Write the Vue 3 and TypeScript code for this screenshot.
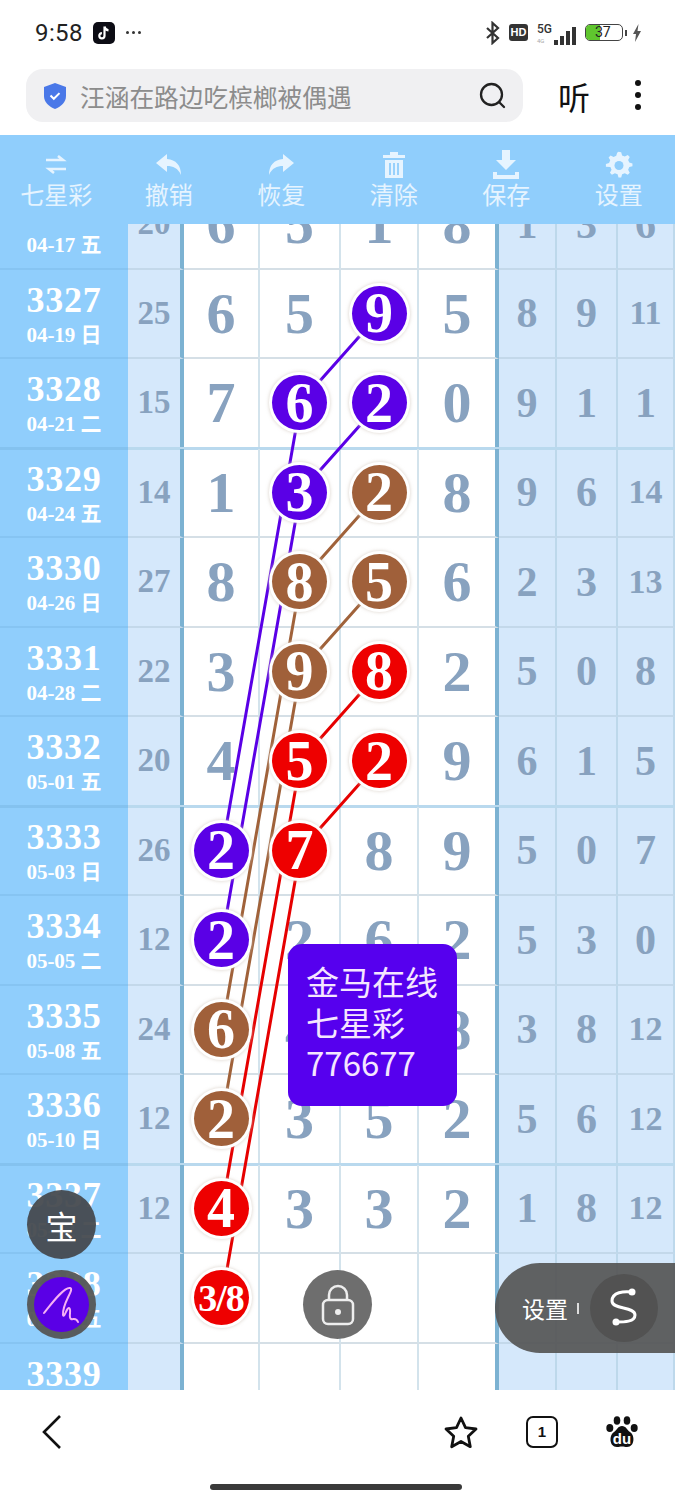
<template>
  <div class="page">
    <!-- status bar -->
    <div class="status">
      <div class="status-left">
        <span class="time">9:58</span>
        <svg class="tiktok" width="22" height="22" viewBox="0 0 22 22">
          <rect width="22" height="22" rx="5" fill="#0c0c14" />
          <path d="M11.5 4.5v9.2a2.6 2.6 0 1 1-2.6-2.6M11.5 4.5c.3 2.2 1.8 3.6 4 3.8" fill="none" stroke="#fff" stroke-width="2.2" />
        </svg>
        <span class="dots-small"><i></i><i></i><i></i></span>
      </div>
      <div class="status-right">
        <svg width="16" height="24" viewBox="0 0 16 24">
          <path d="M2 7l11 10-5.500 5V2L13 7 2 17" fill="none" stroke="#333" stroke-width="2.200" />
        </svg>
        <span class="hd">HD</span>
        <div class="signal">
          <div class="net"><b>5G</b><small>4G</small></div>
          <i style="height: 5px"></i><i style="height: 9px"></i><i style="height: 14px"></i><i style="height: 18px"></i>
        </div>
        <div class="battery"><span class="level"></span><span class="pct">37</span></div>
        <span class="nub"></span>
        <svg width="10" height="18" viewBox="0 0 10 18">
          <path d="M6.500 0L1 10h3l-1 8 6-11H5.500z" fill="#555" />
        </svg>
      </div>
    </div>

    <!-- search row -->
    <div class="search-row">
      <div class="search">
        <svg width="22" height="26" viewBox="0 0 22 26">
          <path d="M11 0l11 4v9c0 6-4.500 10.500-11 13C4.500 23.500 0 19 0 13V4z" fill="#4a78e8" />
          <path d="M6.500 12.500l3.300 3.300 5.700-5.700" fill="none" stroke="#fff" stroke-width="2" />
        </svg>
        <span class="query">汪涵在路边吃槟榔被偶遇</span>
        <svg class="lens" width="27" height="27" viewBox="0 0 27 27">
          <circle cx="12.500" cy="12.500" r="10.500" fill="none" stroke="#222" stroke-width="2.300" />
          <path d="M20 20l5 5" stroke="#222" stroke-width="2.300" stroke-linecap="round" />
        </svg>
      </div>
      <span class="listen">听</span>
      <div class="more"><i></i><i></i><i></i></div>
    </div>

    <!-- toolbar -->
    <div class="toolbar">
      <div class="tool" v-for="t in tools" :key="t.label">
        <svg width="30" height="30" viewBox="0 0 30 30" v-html="t.icon"></svg>
        <span>{{ t.label }}</span>
      </div>
    </div>

    <!-- chart -->
    <div class="viewport">
      <div class="board">
        <div
          class="row"
          v-for="(r, ri) in rows"
          :key="r.no"
          :class="{ thick: (r.no - 3325) % 4 === 0 }"
        >
          <div class="cell head">
            <div class="no">{{ r.no }}</div>
            <div class="date">{{ r.date }}</div>
          </div>
          <div class="cell sum">{{ r.sum }}</div>
          <div class="cell big" v-for="(v, ci) in r.main" :key="ci" :class="{ edge: ci === 3 }">
            <span v-if="ballAt(ri, ci)" class="ball" :class="[ballAt(ri, ci), { small: v.length > 1 }]">{{ v }}</span>
            <template v-else>{{ v }}</template>
          </div>
          <div class="cell side" v-for="(v, ci) in r.rest" :key="ci" :class="{ two: v.length > 1 }">{{ v }}</div>
        </div>

        <svg class="lines" width="675" height="1253">
          <polyline
            v-for="(c, i) in chains"
            :key="i"
            :points="toPoints(c.pts)"
            :stroke="lineColors[c.color]"
            fill="none"
            stroke-width="3"
          />
        </svg>

        <div class="note">
          <div>金马在线</div>
          <div>七星彩</div>
          <div>776677</div>
        </div>
      </div>

      <div class="fab bao">宝</div>
      <div class="fab sign">
        <div class="sign-in">
          <svg width="44" height="44" viewBox="0 0 44 44">
            <path d="M4 30C12 20 24 4 30 5 35 6 22 20 23 32 24 36 27 24 29 25 32 26 28 34 31 36 33 37 36 34 38 39" fill="none" stroke="#f6b0f4" stroke-width="2" stroke-linecap="round" />
          </svg>
        </div>
      </div>
      <div class="fab lock">
        <svg width="34" height="42" viewBox="0 0 34 42">
          <rect x="2" y="16" width="30" height="24" rx="5" fill="none" stroke="#eee" stroke-width="2.500" />
          <path d="M8 16v-5a9 9 0 0 1 18 0v5" fill="none" stroke="#eee" stroke-width="2.500" />
          <circle cx="17" cy="28" r="3" fill="#eee" />
        </svg>
      </div>
      <div class="pill">
        <span class="pill-text">设置</span>
        <span class="pill-bar"></span>
        <div class="pill-btn">
          <svg width="36" height="44" viewBox="0 0 36 44">
            <path d="M26 6C18 5 6 6 6 15 6 24 29 20 29 29 29 36 18 36 10 36" fill="none" stroke="#fff" stroke-width="3" stroke-linecap="round" />
            <circle cx="26" cy="6" r="3.500" fill="#fff" />
            <circle cx="10" cy="36" r="3.500" fill="#fff" />
          </svg>
        </div>
      </div>
    </div>

    <!-- bottom bar -->
    <div class="bottom">
      <svg class="back" width="22" height="36" viewBox="0 0 22 36">
        <path d="M19 2L3 18l16 16" fill="none" stroke="#111" stroke-width="2.600" />
      </svg>
      <svg class="star" width="36" height="34" viewBox="0 0 36 34">
        <path d="M18 3l4.500 9.700 10.500 1.300-7.700 7.200 2 10.500L18 26.500 8.700 31.700l2-10.500L3 14l10.500-1.300z" fill="none" stroke="#111" stroke-width="2.800" stroke-linejoin="round" />
      </svg>
      <div class="tabs">1</div>
      <svg class="paw" width="32" height="32" viewBox="0 0 32 32">
        <ellipse cx="11" cy="4.500" rx="3.300" ry="4.300" fill="#111" />
        <ellipse cx="21" cy="4.500" rx="3.300" ry="4.300" fill="#111" />
        <ellipse cx="3.800" cy="12" rx="3.500" ry="4" fill="#111" />
        <ellipse cx="28.200" cy="12" rx="3.500" ry="4" fill="#111" />
        <path d="M16 10c4 0 5 4 8 6 5 3 5 15-3 15-2 0-3-.5-5-.5s-3 .5-5 .5C3 31 3 19 8 16c3-2 4-6 8-6z" fill="#111" />
        <text x="16" y="28" text-anchor="middle" font-size="15" font-weight="700" fill="#fff" font-family="Liberation Sans, sans-serif">du</text>
      </svg>
      <div class="home"></div>
    </div>
  </div>
</template>

<script setup lang="ts">
type Tone = 'purple' | 'brown' | 'red'

interface Row {
  no: number
  date: string
  sum: string
  main: string[]
  rest: string[]
}

const ROW_H = 89.5
const COL_X = [222, 300.5, 380, 457.5]

const tools = [
  {
    label: '七星彩',
    icon: '<path d="M5 10h17l-5-4M25 19H8l5 4" fill="none" stroke="#e6f4ff" stroke-width="2.600"/>'
  },
  {
    label: '撤销',
    icon: '<path d="M13 4L2 13l11 9v-6c6 0 11 2 14 9 0-10-5-15-14-16z" fill="#e6f4ff"/>'
  },
  {
    label: '恢复',
    icon: '<path d="M17 4l11 9-11 9v-6c-6 0-11 2-14 9 0-10 5-15 14-16z" fill="#e6f4ff"/>'
  },
  {
    label: '清除',
    icon: '<path d="M11 2h8v3h7v3H4V5h7zM6 10h18v18H6z" fill="#e6f4ff"/><path d="M11 13v12M15 13v12M19 13v12" stroke="#90cefc" stroke-width="1.800"/>'
  },
  {
    label: '保存',
    icon: '<path d="M11 0h8v10h6L15 20 5 10h6zM2 22h4v3h18v-3h4v7H2z" fill="#e6f4ff"/>'
  },
  {
    label: '设置',
    icon: '<path d="M15 2l3 .5 1 3.500 3 1.300 3.300-1.800 2.200 2.200-1.800 3.300 1.300 3 3.500 1v3l-3.500 1-1.300 3 1.800 3.300-2.200 2.200-3.300-1.800-3 1.300-1 3.500h-3l-1-3.500-3-1.300-3.300 1.800-2.200-2.200 1.800-3.300-1.300-3L1 18.500v-3l3.500-1 1.300-3L4 8.200 6.200 6l3.300 1.800 3-1.300 1-3.500z" transform="translate(1 0) scale(.9)" fill="#e6f4ff"/><circle cx="15" cy="15.500" r="4.500" fill="#90cefc"/>'
  }
]

const rows: Row[] = [
  { no: 3326, date: '04-17 五', sum: '20', main: ['6', '5', '1', '8'], rest: ['1', '3', '6'] },
  { no: 3327, date: '04-19 日', sum: '25', main: ['6', '5', '9', '5'], rest: ['8', '9', '11'] },
  { no: 3328, date: '04-21 二', sum: '15', main: ['7', '6', '2', '0'], rest: ['9', '1', '1'] },
  { no: 3329, date: '04-24 五', sum: '14', main: ['1', '3', '2', '8'], rest: ['9', '6', '14'] },
  { no: 3330, date: '04-26 日', sum: '27', main: ['8', '8', '5', '6'], rest: ['2', '3', '13'] },
  { no: 3331, date: '04-28 二', sum: '22', main: ['3', '9', '8', '2'], rest: ['5', '0', '8'] },
  { no: 3332, date: '05-01 五', sum: '20', main: ['4', '5', '2', '9'], rest: ['6', '1', '5'] },
  { no: 3333, date: '05-03 日', sum: '26', main: ['2', '7', '8', '9'], rest: ['5', '0', '7'] },
  { no: 3334, date: '05-05 二', sum: '12', main: ['2', '2', '6', '2'], rest: ['5', '3', '0'] },
  { no: 3335, date: '05-08 五', sum: '24', main: ['6', '4', '6', '8'], rest: ['3', '8', '12'] },
  { no: 3336, date: '05-10 日', sum: '12', main: ['2', '3', '5', '2'], rest: ['5', '6', '12'] },
  { no: 3337, date: '05-12 二', sum: '12', main: ['4', '3', '3', '2'], rest: ['1', '8', '12'] },
  { no: 3338, date: '05-15 五', sum: '', main: ['3/8', '', '', ''], rest: ['', '', ''] },
  { no: 3339, date: '05-17 日', sum: '', main: ['', '', '', ''], rest: ['', '', ''] }
]

// [row index, main column index]
const chains: { color: Tone; pts: [number, number][] }[] = [
  { color: 'purple', pts: [[1, 2], [2, 1], [7, 0]] },
  { color: 'purple', pts: [[2, 2], [3, 1], [8, 0]] },
  { color: 'brown', pts: [[3, 2], [4, 1], [9, 0]] },
  { color: 'brown', pts: [[4, 2], [5, 1], [10, 0]] },
  { color: 'red', pts: [[5, 2], [6, 1], [11, 0]] },
  { color: 'red', pts: [[6, 2], [7, 1], [12, 0]] }
]

const lineColors: Record<Tone, string> = {
  purple: '#5a00e6',
  brown: '#a0623a',
  red: '#e60000'
}

const ballAt = (ri: number, ci: number): Tone | undefined => {
  const hit = chains.find((c) => c.pts.some(([r, k]) => r === ri && k === ci))
  return hit?.color
}

const toPoints = (pts: [number, number][]) =>
  pts.map(([r, k]) => `${COL_X[k]},${(r + 0.5) * ROW_H - 1}`).join(' ')
</script>

<style scoped>
.page {
  width: 675px;
  height: 1500px;
  background: #fff;
  overflow: hidden;
  font-family: 'Liberation Serif', 'Noto Sans CJK SC', serif;
}

/* status bar */
.status {
  height: 69px;
  padding: 0 33px 4px 35px;
  box-sizing: border-box;
  display: flex;
  align-items: center;
  justify-content: space-between;
  font-family: Roboto, sans-serif;
}

.status-left {
  display: flex;
  align-items: center;
}

.time {
  font-size: 24px;
  letter-spacing: 0.4px;
  color: #222;
}

.tiktok {
  margin-left: 10px;
}

.dots-small {
  display: flex;
  gap: 3px;
  margin-left: 11px;
}

.dots-small i {
  width: 3px;
  height: 3px;
  border-radius: 50%;
  background: #333;
}

.status-right {
  display: flex;
  align-items: center;
}

.hd {
  margin-left: 8px;
  width: 19px;
  height: 17px;
  border-radius: 3px;
  background: #333;
  color: #fff;
  font: 700 11px/17px 'Liberation Sans', sans-serif;
  text-align: center;
}

.signal {
  margin-left: 9px;
  display: flex;
  align-items: flex-end;
  gap: 2px;
  height: 24px;
}

.signal i {
  width: 4px;
  background: #333;
}

.net {
  display: flex;
  flex-direction: column;
  width: 17px;
  margin-right: -2px;
  color: #333;
  line-height: 9px;
}

.net b {
  font-size: 12px;
  font-weight: 500;
  line-height: 14px;
}

.net small {
  font-size: 6px;
  color: #aaa;
}

.battery {
  position: relative;
  margin-left: 9px;
  width: 38px;
  height: 17px;
  border: 1.5px solid #444;
  border-radius: 5px;
  box-sizing: border-box;
  overflow: hidden;
}

.level {
  display: block;
  width: 14px;
  height: 100%;
  background: #5fc62e;
}

.pct {
  position: absolute;
  left: 9px;
  top: -1px;
  font-size: 14px;
  line-height: 17px;
  color: #222;
}

.nub {
  width: 2px;
  height: 6px;
  margin: 0 5px 0 2px;
  background: #444;
}

/* search */
.search-row {
  height: 66px;
  display: flex;
  align-items: flex-start;
}

.search {
  width: 497px;
  height: 53px;
  margin-left: 26px;
  padding: 0 17px 0 18px;
  box-sizing: border-box;
  display: flex;
  align-items: center;
  background: #f0f0f2;
  border-radius: 17px;
}

.query {
  margin-left: 14px;
  font: 24.7px 'Noto Sans CJK SC', sans-serif;
  color: #8c8c8c;
}

.lens {
  margin-left: auto;
}

.listen {
  margin: 5px 0 0 35px;
  font: 32px/44px 'Noto Sans CJK SC', sans-serif;
  color: #111;
}

.more {
  margin: 11px 0 0 45px;
  display: flex;
  flex-direction: column;
  gap: 6px;
}

.more i {
  width: 6px;
  height: 6px;
  border-radius: 50%;
  background: #111;
}

/* toolbar */
.toolbar {
  height: 89px;
  display: grid;
  grid-template-columns: repeat(6, 1fr);
  background: #90cefc;
  position: relative;
  z-index: 5;
}

.tool {
  display: flex;
  flex-direction: column;
  align-items: center;
  padding-top: 15px;
}

.tool span {
  margin-top: -3px;
  font: 24px/34px 'Noto Sans CJK SC', sans-serif;
  color: #e6f4ff;
}

/* chart */
.viewport {
  position: relative;
  height: 1166px;
  overflow: hidden;
}

.board {
  position: relative;
  margin-top: -44px;
}

.row {
  height: 89.5px;
  display: grid;
  grid-template-columns: 128px 56px 76px 81px 78px 80px 58px 61px 57px;
  box-sizing: border-box;
}

.cell {
  display: flex;
  align-items: center;
  justify-content: center;
  box-sizing: border-box;
  height: 89.5px;
  border-right: 2px solid #d3e3ec;
  border-bottom: 2px solid #d5dfe6;
  color: #88a2bf;
  font-weight: 700;
}

.thick .cell {
  box-shadow: 0 -2px 0 #b9d9ee, inset 0 1px 0 #b9d9ee;
}

.head {
  flex-direction: column;
  padding-top: 5px;
  background: #90cefc;
  color: #fff;
  border-right: none;
  border-bottom-color: #86c4f2;
}

.thick .head {
  box-shadow: 0 -2px 0 #84c2ef, inset 0 1px 0 #84c2ef;
}

.no {
  font-size: 36px;
  line-height: 38px;
  letter-spacing: 0.8px;
}

.date {
  font-size: 21px;
  line-height: 32px;
  font-family: 'Liberation Serif', 'Noto Sans CJK SC', serif;
}

.sum {
  background: #d5e8fb;
  font-size: 33px;
  border-right: 4px solid #7cb2d2;
  border-bottom-color: #c3d8ea;
}

.big {
  font-size: 58px;
}

.big.edge {
  border-right: 4px solid #7cb2d2;
}

.side {
  background: #d5e8fb;
  font-size: 42px;
  border-right-color: #bdd8eb;
  border-bottom-color: #c3d8ea;
}

.side.two {
  font-size: 34px;
}

.ball {
  position: relative;
  z-index: 2;
  width: 55px;
  height: 55px;
  border-radius: 50%;
  display: flex;
  align-items: center;
  justify-content: center;
  color: #fff;
  font-size: 56px;
  box-shadow: 0 0 0 3px #fff, 0 0 3px 4px rgba(210, 200, 190, 0.5);
}

.ball.small {
  font-size: 38px;
  letter-spacing: -1px;
}

.purple {
  background: #5a00e6;
}

.brown {
  background: #a0603a;
}

.red {
  background: #ee0000;
}

.lines {
  position: absolute;
  left: 0;
  top: 0;
  z-index: 1;
  pointer-events: none;
}

.note {
  position: absolute;
  left: 288px;
  top: 764px;
  z-index: 3;
  width: 169px;
  height: 162px;
  padding: 17px 0 0 18px;
  box-sizing: border-box;
  border-radius: 14px;
  background: #5600ee;
  color: #f5e6ff;
  font: 33px/40.500px 'Noto Sans CJK SC', sans-serif;
}

/* floating buttons */
.fab {
  position: absolute;
  z-index: 4;
  width: 69px;
  height: 69px;
  border-radius: 50%;
  display: flex;
  align-items: center;
  justify-content: center;
}

.bao {
  left: 27px;
  top: 966px;
  background: rgba(68, 72, 78, 0.94);
  color: #fff;
  font: 32px 'Noto Sans CJK SC', sans-serif;
}

.sign {
  left: 27px;
  top: 1046px;
  background: rgba(85, 85, 85, 0.95);
}

.sign-in {
  width: 55px;
  height: 55px;
  border-radius: 50%;
  background: #5a00e6;
  display: flex;
  align-items: center;
  justify-content: center;
}

.lock {
  left: 303px;
  top: 1046px;
  background: #6e6e6e;
}

.pill {
  position: absolute;
  z-index: 4;
  left: 495px;
  top: 1039px;
  width: 180px;
  height: 90px;
  border-radius: 45px 0 0 45px;
  background: rgba(85, 85, 85, 0.92);
  display: flex;
  align-items: center;
  padding-left: 27px;
  box-sizing: border-box;
}

.pill-text {
  font: 23px 'Noto Sans CJK SC', sans-serif;
  color: #fff;
}

.pill-bar {
  width: 2px;
  height: 11px;
  margin-left: 9px;
  background: #ddd;
}

.pill-btn {
  width: 68px;
  height: 68px;
  margin-left: 11px;
  border-radius: 50%;
  background: #525252;
  display: flex;
  align-items: center;
  justify-content: center;
}

/* bottom bar */
.bottom {
  position: relative;
  height: 110px;
  background: #fff;
}

.back {
  position: absolute;
  left: 41px;
  top: 24px;
}

.star {
  position: absolute;
  left: 443px;
  top: 25px;
}

.tabs {
  position: absolute;
  left: 526px;
  top: 26px;
  width: 32px;
  height: 32px;
  box-sizing: border-box;
  border: 2.500px solid #111;
  border-radius: 7px;
  font: 700 15px/27px 'Liberation Sans', sans-serif;
  text-align: center;
  color: #111;
}

.paw {
  position: absolute;
  left: 606px;
  top: 26px;
}

.home {
  position: absolute;
  left: 210px;
  top: 94px;
  width: 252px;
  height: 6px;
  border-radius: 3px;
  background: #3a3a3a;
}
</style>
